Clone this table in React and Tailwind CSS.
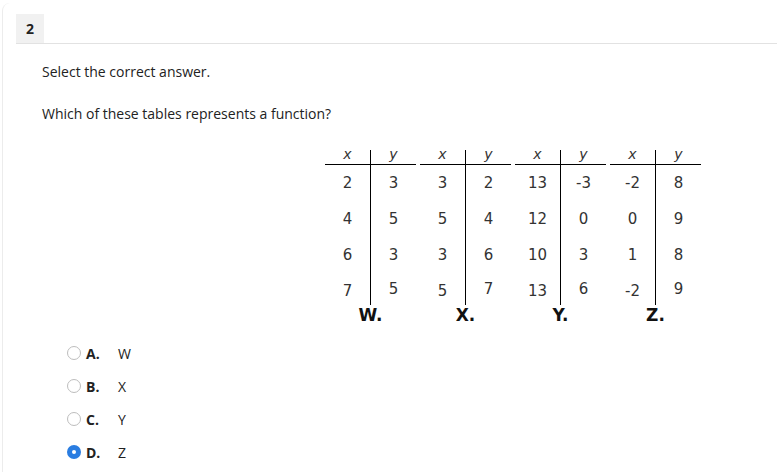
const tables = [
  { label: 'W.', rows: [['2', '3'], ['4', '5'], ['6', '3'], ['7', '5']] },
  { label: 'X.', rows: [['3', '2'], ['5', '4'], ['3', '6'], ['5', '7']] },
  { label: 'Y.', rows: [['13', '-3'], ['12', '0'], ['10', '3'], ['13', '6']] },
  { label: 'Z.', rows: [['-2', '8'], ['0', '9'], ['1', '8'], ['-2', '9']] },
];

const options = [
  { letter: 'A.', text: 'W', checked: false },
  { letter: 'B.', text: 'X', checked: false },
  { letter: 'C.', text: 'Y', checked: false },
  { letter: 'D.', text: 'Z', checked: true },
];

function XYTable({ label, rows }) {
  return (
    <div className="w-[91px] flex flex-col font-['DejaVu_Sans',Verdana,sans-serif] text-[#333]">
      <div className="flex border-b border-black h-[18px]">
        <div className="w-[45px] text-center italic text-[14px] leading-[15px]">x</div>
        <div className="flex-1 border-l border-black mt-[3px]">
          <div className="-mt-[3px] text-center italic text-[14px] leading-[15px]">y</div>
        </div>
      </div>
      {rows.map((r, i) => (
        <div key={i} className="flex h-[36px]">
          <div className="w-[45px] flex items-center justify-center text-[15px]">{r[0]}</div>
          <div className={`flex-1 border-l border-black flex items-center justify-center text-[15px] ${i === rows.length - 1 ? 'mb-[4px]' : ''}`}>{r[1]}</div>
        </div>
      ))}
      <div className="h-[18px] w-[91px] text-center font-bold text-[17px] leading-[18px] text-[#111] -mt-[3px]">{label}</div>
    </div>
  );
}

function Radio({ checked }) {
  if (checked) {
    return (
      <span className="w-[14px] h-[14px] rounded-full bg-[#2a7de1] flex items-center justify-center">
        <span className="w-[4px] h-[4px] rounded-full bg-white" />
      </span>
    );
  }
  return <span className="w-[14px] h-[14px] rounded-full border border-[#bdbdbd] bg-white" />;
}

export default function App() {
  return (
    <div className="w-[777px] h-[472px] bg-white overflow-hidden font-['Open_Sans',sans-serif] text-[#222]">
      <div className="ml-[2px] mt-[3px] pt-[11px] h-[469px] border-l border-[#ececec] rounded-tl-[8px]">
        <div className="ml-[13px] border-b border-[#e2e2e2] flex">
          <div className="w-[28px] h-[29px] bg-[#f1f1f1] flex items-center justify-center font-bold text-[14px]">2</div>
        </div>
        <div className="pl-[39px] flex flex-col">
          <p className="mt-[18px] text-[14px] leading-[20px]">Select the correct answer.</p>
          <p className="mt-[22px] text-[14px] leading-[20px]">Which of these tables represents a function?</p>
          <div className="mt-[23px] ml-[283px] flex gap-[4px]">
            {tables.map((t) => (
              <XYTable key={t.label} label={t.label} rows={t.rows} />
            ))}
          </div>
          <div className="mt-[19px] ml-[25px] flex flex-col gap-[13px]">
            {options.map((o) => (
              <div key={o.letter} className="flex items-center h-[20px] text-[14px]">
                <Radio checked={o.checked} />
                <span className="ml-[5px] w-[32px] font-bold">{o.letter}</span>
                <span>{o.text}</span>
              </div>
            ))}
          </div>
        </div>
      </div>
    </div>
  );
}
